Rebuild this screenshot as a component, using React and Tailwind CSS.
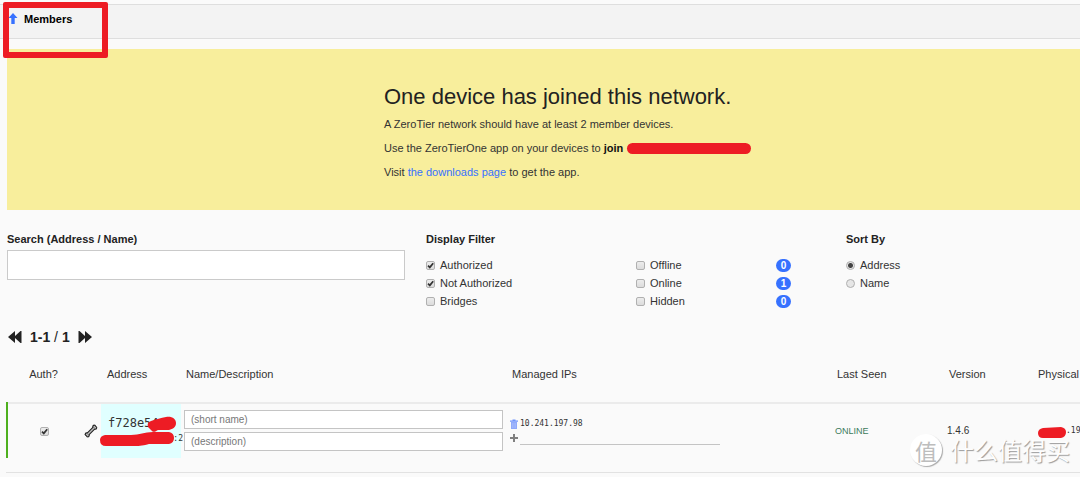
import { useState } from 'react';

const member = {
    address: 'f728e54',
    mac: ':2',
    ip: '10.241.197.98',
    version: '1.4.6',
    physical: '.190',
};

function Tick({ label, id, ...props }) {
    return (
        <span className="flex items-center gap-[5px]">
            <span className="relative block size-[9px]">
                <input
                    type="checkbox"
                    id={id}
                    aria-label={label ? undefined : id}
                    className="peer block size-[9px] appearance-none rounded-[2px] border border-[#b0b0b0] bg-linear-to-b from-[#ececec] to-[#dcdcdc]"
                    {...props}
                />
                <svg viewBox="0 0 9 9" className="pointer-events-none absolute inset-0 hidden size-[9px] peer-checked:block">
                    <path d="M2 4.6 L3.8 6.4 L7.2 2.2" fill="none" stroke="#333" strokeWidth="1.7" />
                </svg>
            </span>
            {label && <label htmlFor={id}>{label}</label>}
        </span>
    );
}

function SortOption({ label, checked, onChange }) {
    return (
        <label className="flex h-[18px] items-center gap-[5px]">
            <input
                type="radio"
                name="sort"
                checked={checked}
                onChange={onChange}
                className="size-[9px] appearance-none rounded-full border border-[#b0b0b0] bg-[#e6e6e6] checked:bg-[radial-gradient(circle,#444_0_2px,#e6e6e6_3px)]"
            />
            {label}
        </label>
    );
}

function Filter({ label, count, checked, onChange }) {
    return (
        <div className="flex h-[18px] items-center justify-between">
            <Tick id={label} label={label} checked={checked} onChange={onChange} />
            {count !== undefined && (
                <span className="w-[15px] rounded-full bg-[#3671ff] text-center text-[10px] leading-[13px] font-bold text-white">
                    {count}
                </span>
            )}
        </div>
    );
}

function Banner() {
    return (
        <section className="ml-[7px] mt-[10px] bg-[#f8ee9c] pt-[35px] pb-[30px] pl-[377px]">
            <h1 className="text-[22px] leading-[26px] text-[#222]">One device has joined this network.</h1>
            <div className="mt-[6px] flex flex-col gap-2 leading-[16px]">
                <p>A ZeroTier network should have at least 2 member devices.</p>
                <p className="flex items-center">
                    <span>
                        Use the ZeroTierOne app on your devices to <b className="text-[#111]">join</b>
                    </span>
                    <span className="ml-1 h-[11px] w-[124px] rounded-full bg-[#ed1c24]" />
                </p>
                <p>
                    Visit <a href="#downloads" className="text-[#3671ff]">the downloads page</a> to get the app.
                </p>
            </div>
        </section>
    );
}

function MembersTable() {
    const [authorized, setAuthorized] = useState(true);

    return (
        <div className="ml-[6px] overflow-hidden border-b border-[#e2e2e2] pb-[14px]">
            <table className="w-full table-fixed border-collapse text-left">
                <colgroup>
                    <col className="w-[75px]" />
                    <col className="w-[19px]" />
                    <col className="w-[80px]" />
                    <col />
                    <col />
                    <col className="w-[112px]" />
                    <col className="w-[91px]" />
                    <col className="w-[42px]" />
                </colgroup>
                <thead>
                    <tr className="h-[57px] border-b-2 border-[#ebebeb] whitespace-nowrap [&>th]:font-normal">
                        <th className="pr-[2px] text-center">Auth?</th>
                        <th />
                        <th className="pl-[6px]">Address</th>
                        <th className="pl-[5px]">Name/Description</th>
                        <th className="pl-[4px]">Managed IPs</th>
                        <th className="pl-[2px]">Last Seen</th>
                        <th className="pl-[2px]">Version</th>
                        <th>Physical</th>
                    </tr>
                </thead>
                <tbody>
                    <tr className="h-[55px]">
                        <td className="border-l-2 border-[#4eb01e] pr-[2px]">
                            <div className="flex justify-center">
                                <Tick id="Authorize member" checked={authorized} onChange={() => setAuthorized(!authorized)} />
                            </div>
                        </td>
                        <td>
                            <button aria-label="Settings" className="ml-[2px] block">
                                <svg viewBox="0 0 14 14" className="size-[14px]">
                                    <path d="M3.5 10.5 L10.5 3.5" stroke="#222" strokeWidth="3.6" />
                                    <g fill="#222">
                                        <circle cx="2.6" cy="10.2" r="1.9" />
                                        <circle cx="3.8" cy="11.5" r="1.9" />
                                        <circle cx="10.2" cy="2.5" r="1.9" />
                                        <circle cx="11.4" cy="3.8" r="1.9" />
                                    </g>
                                    <g fill="#bbb">
                                        <circle cx="2.7" cy="10.3" r="0.9" />
                                        <circle cx="3.7" cy="11.4" r="0.9" />
                                        <circle cx="10.3" cy="2.6" r="0.9" />
                                        <circle cx="11.3" cy="3.7" r="0.9" />
                                    </g>
                                    <path d="M3.5 10.5 L10.5 3.5" stroke="#bbb" strokeWidth="1.4" />
                                </svg>
                            </button>
                        </td>
                        <td className="relative bg-[#e0ffff] align-top font-['DejaVu_Sans_Mono',monospace]">
                            <div className="mt-[11px] pl-[7px] text-[12px] leading-[16px]">{member.address}</div>
                            <div className="-mr-[2px] text-right text-[8px] leading-[16px]">{member.mac}</div>
                            <svg viewBox="0 0 84 55" className="pointer-events-none absolute top-0 -left-[2px] h-[55px] w-[84px]">
                                <path
                                    d="M52 17 C57 15 62 14 67 13 C73 12 77 15 77 19 C77 23 74 25 70 26 L59 26 C57 27 55 29 53 27 L49 23 C48 20 49 18 52 17 Z"
                                    fill="#ed1c24"
                                />
                                <path
                                    d="M6 31 H32 C41 31 45 28 54 28 L70 28 Q75 29 75 34 Q75 39 70 40 L50 40 C42 42 40 42 33 42 H7 Q1 42 1 36 Q1 32 6 31 Z"
                                    fill="#ed1c24"
                                />
                            </svg>
                        </td>
                        <td className="pr-[5px] pl-[3px] align-top">
                            <div className="mt-[6px] flex flex-col gap-[3px]">
                                <input
                                    aria-label="Short name"
                                    placeholder="(short name)"
                                    className="h-[19px] w-full border border-[#c4c4c4] bg-white px-[6px] text-[10px] placeholder:text-[#777]"
                                />
                                <input
                                    aria-label="Description"
                                    placeholder="(description)"
                                    className="h-[19px] w-full border border-[#c4c4c4] bg-white px-[6px] text-[10px] placeholder:text-[#777]"
                                />
                            </div>
                        </td>
                        <td className="pl-[2px] align-top">
                            <div className="mt-[13px] flex h-[13px] items-center gap-[2px]">
                                <button aria-label="Delete IP">
                                    <svg viewBox="0 0 8 10" className="block h-[10px] w-[8px]">
                                        <path d="M0 1.5 H2.5 V0.5 H5.5 V1.5 H8 V2.7 H0 Z" fill="#6f93fb" />
                                        <path d="M1 3 H7 V10 H1 Z" fill="#8fa9fb" />
                                        <path d="M2.9 4 V9 M5.1 4 V9" stroke="#b9c8fd" strokeWidth="0.7" />
                                    </svg>
                                </button>
                                <span className="font-['DejaVu_Sans_Mono',monospace] text-[8px]">{member.ip}</span>
                            </div>
                            <div className="flex items-center gap-[2px]">
                                <button aria-label="Add IP">
                                    <svg viewBox="0 0 8 8" className="block size-[8px]">
                                        <path d="M4 0 V8 M0 4 H8" stroke="#808080" strokeWidth="2" />
                                    </svg>
                                </button>
                                <input aria-label="New IP" className="h-[15px] w-[200px] border-b border-[#c4c4c4] text-[9px] outline-none" />
                            </div>
                        </td>
                        <td className="text-[9px] text-[#3c7a5c]">ONLINE</td>
                        <td className="text-[10px]">{member.version}</td>
                        <td className="whitespace-nowrap">
                            <div className="flex items-center">
                                <svg viewBox="0 0 28 12" className="mt-[4px] h-[12px] w-[28px] shrink-0">
                                    <path d="M5 1 L23 0 Q28 1 28 5 Q28 10 23 11 L5 11 Q0 11 0 6 Q0 2 5 1 Z" fill="#ed1c24" />
                                </svg>
                                <span className="font-['DejaVu_Sans_Mono',monospace] text-[8px]">{member.physical}</span>
                            </div>
                        </td>
                    </tr>
                </tbody>
            </table>
        </div>
    );
}

function Watermark() {
    return (
        <div className="pointer-events-none absolute top-[434px] right-[10px] flex items-center gap-[8px] font-['Noto_Sans_CJK_SC',sans-serif] text-[#fdfdfd]">
            <span className="flex size-[32px] items-center justify-center rounded-full bg-white text-[22px] leading-none text-[#bdbdbd] shadow-[1px_1px_1px_#aaa]">
                值
            </span>
            <span className="text-[24px] leading-[24px] [text-shadow:1px_1px_1px_#999]">什么值得买</span>
        </div>
    );
}

export default function App() {
    const [filters, setFilters] = useState({ Authorized: true, 'Not Authorized': true });
    const [sort, setSort] = useState('Address');

    const filterProps = (label) => ({
        label,
        checked: !!filters[label],
        onChange: () => setFilters({ ...filters, [label]: !filters[label] }),
    });

    return (
        <main className="relative min-h-screen overflow-hidden bg-[#fafafa] pt-1 font-['Liberation_Sans',Arial,sans-serif] text-[11px] leading-[16px] text-[#333]">
            <header className="flex h-[35px] gap-[6px] border-y border-[#dedede] bg-[#f3f3f3] pt-[6px] pl-[8px]">
                <svg viewBox="0 0 10 11" className="mt-[2px] h-[11px] w-[10px]">
                    <path d="M5 0 L9.5 5 H6.7 V11 H3.3 V5 H0.5 Z" fill="#3671ff" />
                </svg>
                <h2 className="font-bold text-black">Members</h2>
            </header>
            <div className="pointer-events-none absolute top-[2px] left-[3px] h-[56px] w-[105px] rounded-[2px] border-[6px] border-[#ed1c24]" />

            <Banner />

            <section className="ml-[7px] mt-[21px] grid grid-cols-[398fr_399fr_234fr] gap-x-[21px]">
                <div>
                    <label htmlFor="search" className="font-bold text-[#222]">Search (Address / Name)</label>
                    <input id="search" className="mt-[3px] block h-[30px] w-full border border-[#cacaca] bg-white px-2" />
                </div>
                <fieldset>
                    <legend className="font-bold text-[#222]">Display Filter</legend>
                    <div className="mt-[9px] grid grid-cols-2 gap-x-[21px]">
                        <div className="flex flex-col">
                            <Filter {...filterProps('Authorized')} />
                            <Filter {...filterProps('Not Authorized')} />
                            <Filter {...filterProps('Bridges')} />
                        </div>
                        <div className="flex flex-col pr-[34px]">
                            <Filter {...filterProps('Offline')} count={0} />
                            <Filter {...filterProps('Online')} count={1} />
                            <Filter {...filterProps('Hidden')} count={0} />
                        </div>
                    </div>
                </fieldset>
                <fieldset>
                    <legend className="font-bold text-[#222]">Sort By</legend>
                    <div className="mt-[9px] flex flex-col">
                        {['Address', 'Name'].map((name) => (
                            <SortOption key={name} label={name} checked={sort === name} onChange={() => setSort(name)} />
                        ))}
                    </div>
                </fieldset>
            </section>

            <nav className="mt-[18px] ml-[8px] flex h-[18px] items-center gap-2 text-[14px] text-[#222]">
                <button aria-label="Previous page">
                    <svg viewBox="0 0 14 12" className="block h-[12px] w-[14px]">
                        <path d="M7 0 V5 L12.5 0 H13.5 V12 H12.5 L7 7 V12 L0 6 Z" fill="#222" />
                    </svg>
                </button>
                <span>
                    <b>1-1</b> / <b>1</b>
                </span>
                <button aria-label="Next page">
                    <svg viewBox="0 0 14 12" className="block h-[12px] w-[14px]">
                        <path d="M7 0 V5 L1.5 0 H0.5 V12 H1.5 L7 7 V12 L14 6 Z" fill="#222" />
                    </svg>
                </button>
            </nav>

            <MembersTable />
            <Watermark />
        </main>
    );
}
